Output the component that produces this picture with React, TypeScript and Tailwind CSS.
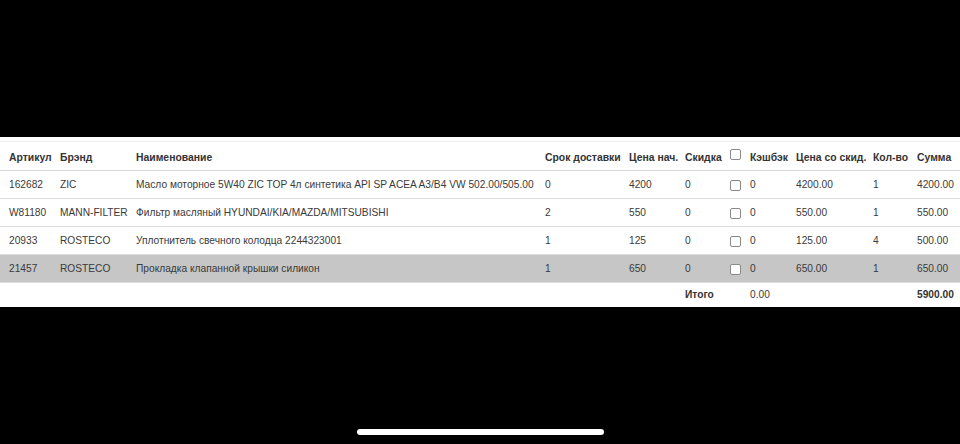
import React from "react";

type Row = {
  sku: string;
  brand: string;
  name: string;
  days: string;
  price: string;
  discount: string;
  cashback: string;
  finalPrice: string;
  qty: string;
  sum: string;
  selected?: boolean;
};

const rows: Row[] = [
  { sku: "162682", brand: "ZIC", name: "Масло моторное 5W40 ZIC TOP 4л синтетика API SP ACEA A3/B4 VW 502.00/505.00", days: "0", price: "4200", discount: "0", cashback: "0", finalPrice: "4200.00", qty: "1", sum: "4200.00" },
  { sku: "W81180", brand: "MANN-FILTER", name: "Фильтр масляный HYUNDAI/KIA/MAZDA/MITSUBISHI", days: "2", price: "550", discount: "0", cashback: "0", finalPrice: "550.00", qty: "1", sum: "550.00" },
  { sku: "20933", brand: "ROSTECO", name: "Уплотнитель свечного колодца 2244323001", days: "1", price: "125", discount: "0", cashback: "0", finalPrice: "125.00", qty: "4", sum: "500.00" },
  { sku: "21457", brand: "ROSTECO", name: "Прокладка клапанной крышки силикон", days: "1", price: "650", discount: "0", cashback: "0", finalPrice: "650.00", qty: "1", sum: "650.00", selected: true },
];

function Box() {
  return <span className="inline-block h-[11px] w-[11px] rounded-[2px] border border-[#8a8a8a] bg-white align-middle" />;
}

export default function App() {
  const td = "pl-[5px] whitespace-nowrap";
  const th = "pl-[5px] pt-[3px] whitespace-nowrap text-left";
  return (
    <div className="flex h-[444px] w-[960px] flex-col bg-black pt-[137px] font-['Liberation_Sans',Arial,sans-serif] text-[10.2px]">
      <div className="bg-white pt-[4px]">
        <table className="w-full table-fixed border-collapse text-[#3a3a3a]">
          <colgroup>
            <col className="w-[55px]" />
            <col className="w-[76px]" />
            <col className="w-[409px]" />
            <col className="w-[84px]" />
            <col className="w-[56px]" />
            <col className="w-[45px]" />
            <col className="w-[20px]" />
            <col className="w-[46px]" />
            <col className="w-[77px]" />
            <col className="w-[44px]" />
            <col />
          </colgroup>
          <thead>
            <tr className="h-[29px] border-t border-b border-t-[#eeeeee] border-b-[#d8d8d8] text-[10.4px] font-bold text-[#333]">
              <th className="pl-[9px] pt-[3px] text-left">Артикул</th>
              <th className={th}>Брэнд</th>
              <th className={th}>Наименование</th>
              <th className={th}>Срок доставки</th>
              <th className={th}>Цена нач.</th>
              <th className={th}>Скидка</th>
              <th className={`${th} pb-[6px]`}><Box /></th>
              <th className={th}>Кэшбэк</th>
              <th className={th}>Цена со скид.</th>
              <th className={th}>Кол-во</th>
              <th className={th}>Сумма</th>
            </tr>
          </thead>
          <tbody>
            {rows.map((r) => (
              <tr key={r.sku} className={`h-[28px] border-b border-[#dddddd] ${r.selected ? "bg-[#c6c6c6]" : ""}`}>
                <td className="pl-[9px]">{r.sku}</td>
                <td className={td}>{r.brand}</td>
                <td className={td}>{r.name}</td>
                <td className={td}>{r.days}</td>
                <td className={td}>{r.price}</td>
                <td className={td}>{r.discount}</td>
                <td className={td}><Box /></td>
                <td className={td}>{r.cashback}</td>
                <td className={td}>{r.finalPrice}</td>
                <td className={td}>{r.qty}</td>
                <td className={td}>{r.sum}</td>
              </tr>
            ))}
            <tr className="h-[24px]">
              <td colSpan={5} />
              <td className={`${td} font-bold text-[#333]`}>Итого</td>
              <td />
              <td className={td}>0.00</td>
              <td colSpan={2} />
              <td className={`${td} font-bold text-[#333]`}>5900.00</td>
            </tr>
          </tbody>
        </table>
      </div>
      <div className="mt-auto mb-[9px] flex justify-center">
        <div className="h-[6px] w-[247px] rounded-full bg-white" />
      </div>
    </div>
  );
}
